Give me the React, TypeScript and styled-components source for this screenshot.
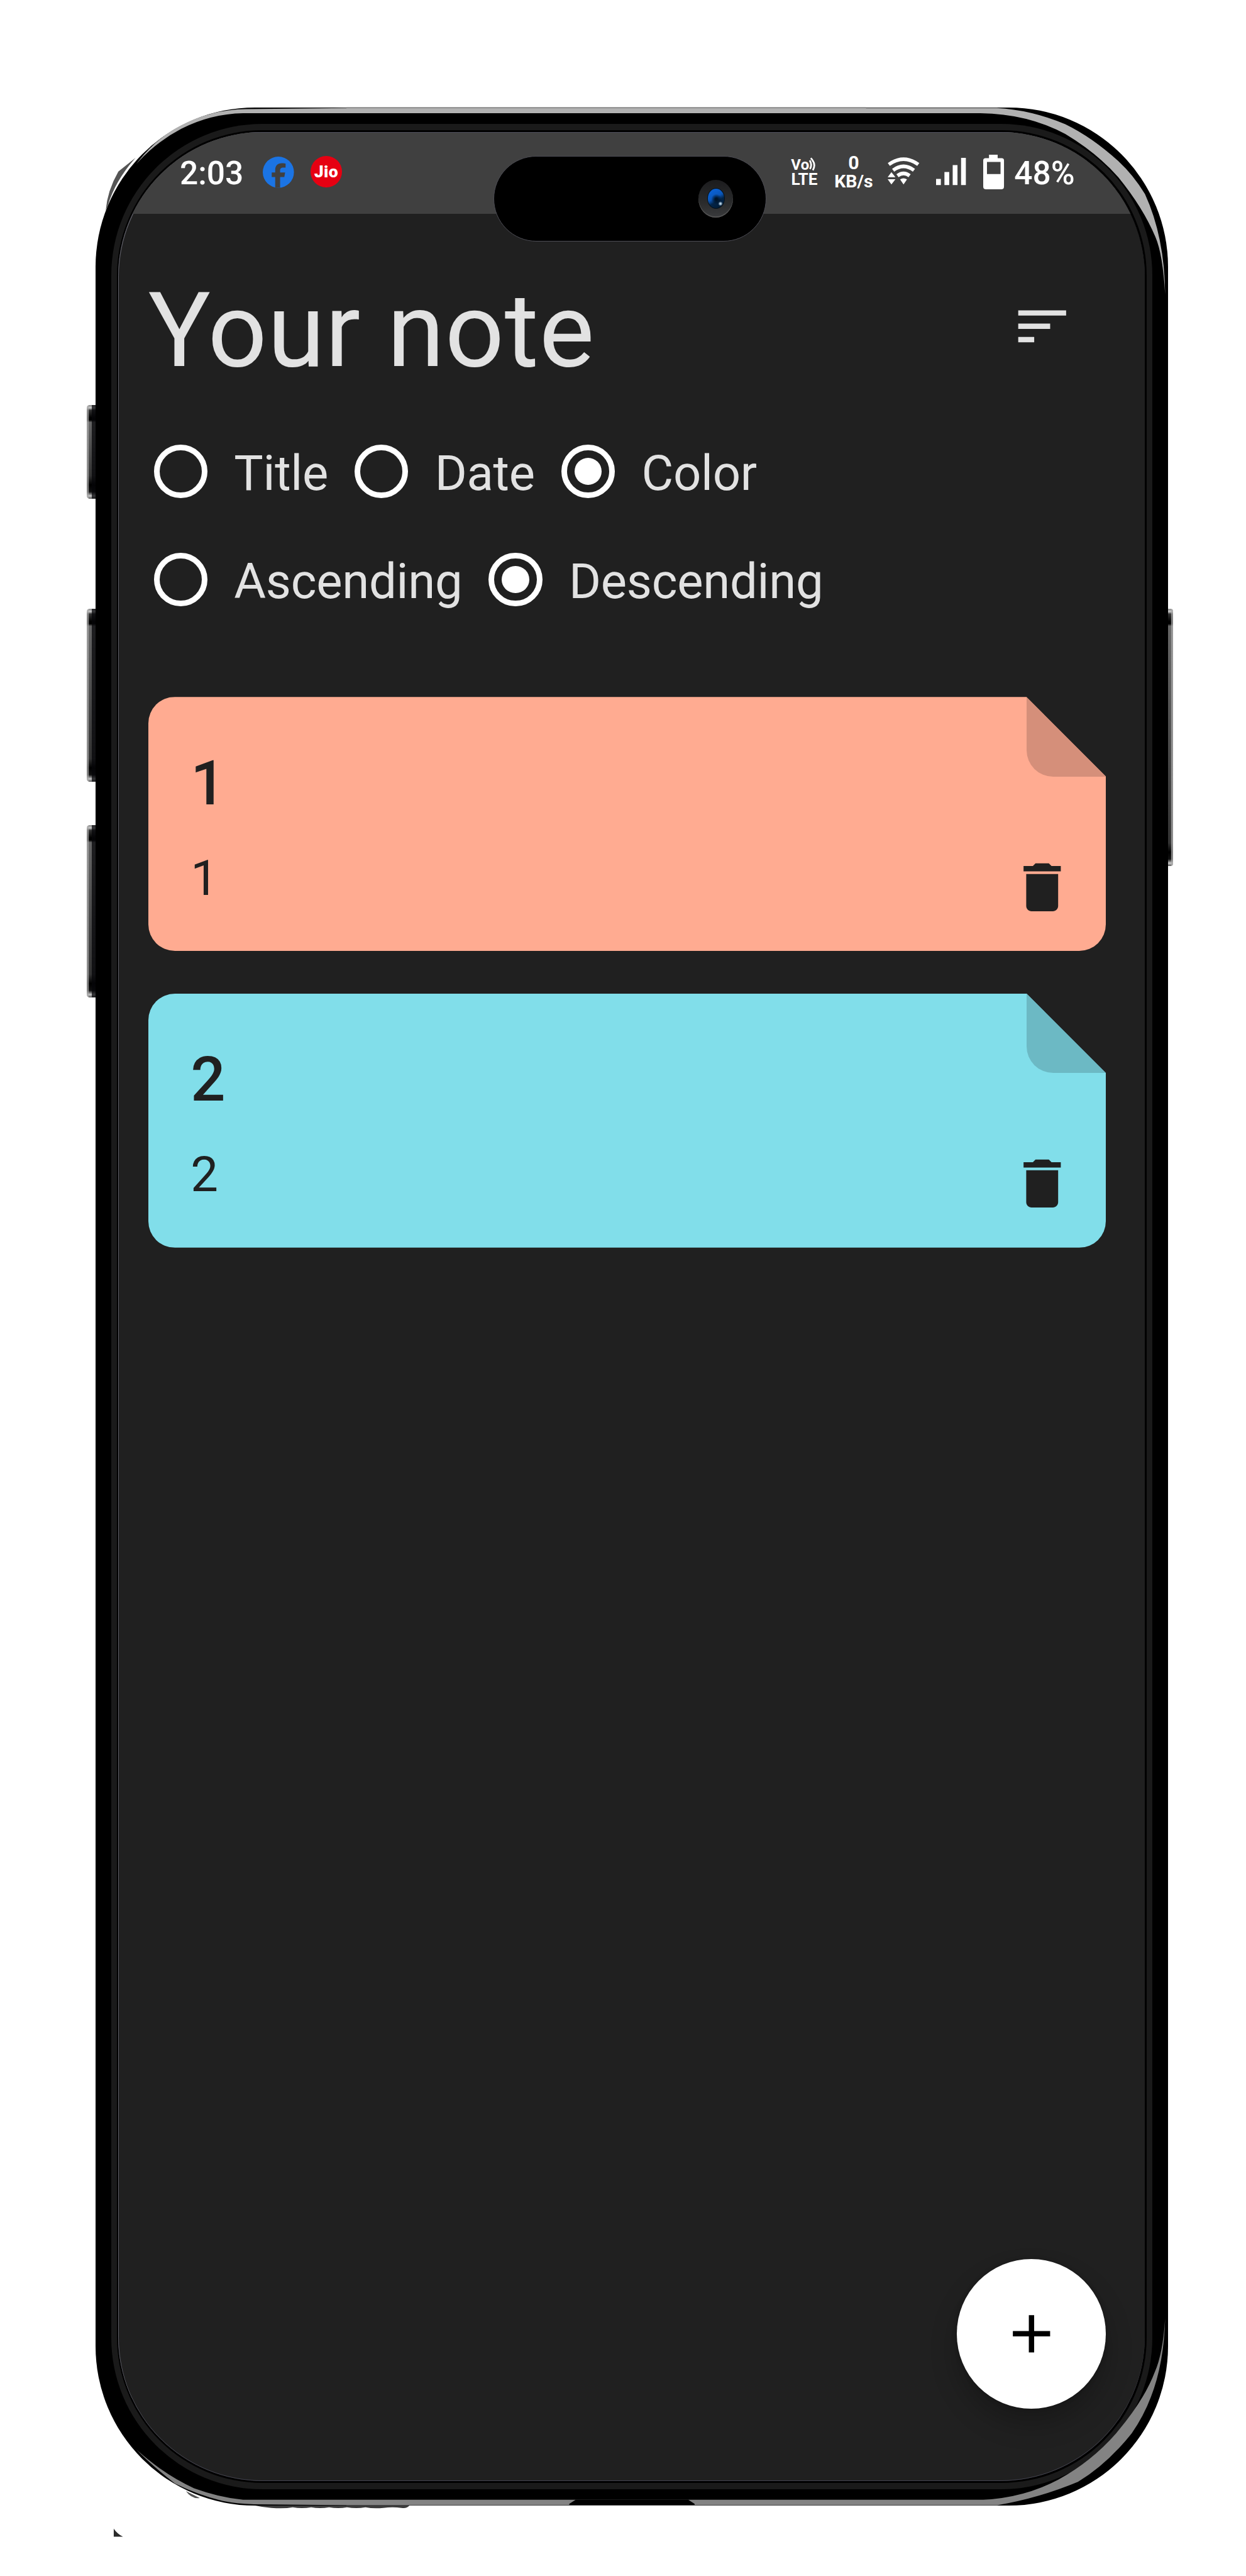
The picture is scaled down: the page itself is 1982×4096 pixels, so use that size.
import React from 'react';
import styled, { createGlobalStyle, css } from 'styled-components';

/* Design units are scaled down to the size of the page. */
const SCALE = 1982 / 2158;
const u = (n: number) => `${+(n * SCALE).toFixed(3)}px`;

const GlobalStyle = createGlobalStyle`
  * { box-sizing: border-box; }
  html, body { margin: 0; padding: 0; background: #ffffff; }
  body { font-family: Roboto, "Liberation Sans", sans-serif; }
`;

const Stage = styled.main`
  width: 1982px;
  height: 4096px;
  padding: ${u(186)} 0 0 ${u(166)};
  overflow: hidden;
  position: relative;
  background: #fff;
`;

const Phone = styled.div`
  position: relative;
  width: ${u(1857)};
  height: ${u(4152)};
  padding: ${u(29)} ${u(27)} ${u(29)} ${u(26.5)};
  background: #000;
  border-radius: ${u(276)};
`;

const Bezel = styled.div`
  height: 100%;
  padding: ${u(10.5)};
  background: #1a1a1a;
  border-radius: ${u(262)};
`;

const Gasket = styled.div`
  height: 100%;
  padding: ${u(3)} ${u(3)} ${u(3)} ${u(2)};
  background: #000;
  border-radius: ${u(252)};
`;

const Screen = styled.div`
  position: relative;
  display: flex;
  flex-direction: column;
  height: 100%;
  overflow: hidden;
  background: #202020;
  border-radius: ${u(250)};
  box-shadow: inset 1px 1px 0 #5d5d66, inset 0 -1px 0 #44444f;
`;

const SideButton = styled.span<{ $top: number; $height: number; $right?: boolean }>`
  position: absolute;
  top: ${p => u(p.$top - 186)};
  height: ${p => u(p.$height)};
  width: ${p => u(p.$right ? 9 : 16)};
  ${p => (p.$right
    ? css`left: 100%; border-radius: 0 ${u(4)} ${u(4)} 0;`
    : css`right: 100%; border-radius: ${u(5)} 0 0 ${u(5)};`)}
  background:
    linear-gradient(${p => (p.$right ? 'to left' : 'to right')}, rgba(170,170,170,.75) 0 ${u(3)}, transparent ${u(4)} ${u(9)}, rgba(5,5,8,.75) ${u(9)}),
    linear-gradient(#888 0, #c8c8c8 ${u(5)}, #333 ${u(9)}, #000 ${u(22)}, #000 ${u(26)}, #666 ${u(30)}, #333 calc(100% - ${u(40)}), #000 calc(100% - ${u(24)}), #111 calc(100% - ${u(12)}), #c8c8c8 calc(100% - ${u(5)}), #555 100%);
`;

const Overlay = styled.svg`
  position: absolute;
  left: 0;
  top: 0;
  width: 1982px;
  height: 4096px;
  pointer-events: none;
`;

const StatusBar = styled.header`
  display: flex;
  align-items: flex-start;
  justify-content: space-between;
  flex: none;
  height: ${u(142)};
  padding: ${u(37)} ${u(122)} 0 ${u(106.5)};
  background: #404040;
  box-shadow: inset 0 1px 0 #50505c;
  color: #fff;
`;

const StatusGroup = styled.div`
  display: flex;
  align-items: flex-start;
`;

const StatusText = styled.span<{ $width: number; $indent?: number }>`
  width: ${p => u(p.$width)};
  margin-top: ${u(2.5)};
  padding-left: ${p => u(p.$indent ?? 0)};
  font-size: ${u(56)};
  line-height: ${u(66)};
  font-weight: 500;
  white-space: nowrap;
`;

const Glyph = styled.svg<{ $w: number; $h: number; $ml?: number; $mt?: number }>`
  display: block;
  flex: none;
  width: ${p => u(p.$w)};
  height: ${p => u(p.$h)};
  margin: ${p => u(p.$mt ?? 0)} 0 0 ${p => u(p.$ml ?? 0)};
  overflow: visible;
`;

const JioBadge = styled.span`
  display: flex;
  align-items: center;
  justify-content: center;
  width: ${u(54)};
  height: ${u(54)};
  margin: ${u(5)} 0 0 ${u(29)};
  border-radius: 50%;
  background: #e60012;
  font-size: ${u(29)};
  font-weight: 900;
  letter-spacing: ${u(0.4)};
`;

const Stacked = styled.span<{ $ml: number; $w: number }>`
  display: flex;
  flex-direction: column;
  align-items: center;
  width: ${p => u(p.$w)};
  margin-left: ${p => u(p.$ml)};
  font-weight: 700;
  white-space: nowrap;
`;

const StackLine = styled.span<{ $size: number; $lh: number; $mt?: number }>`
  height: ${p => u(p.$lh)};
  margin-top: ${p => u(p.$mt ?? 0)};
  font-size: ${p => u(p.$size)};
  line-height: ${p => u(p.$lh)};
`;

const VoLine = styled(StackLine)`
  display: flex;
  align-items: flex-start;
  align-self: flex-start;
  letter-spacing: ${u(0.3)};
`;

const Island = styled.div`
  position: absolute;
  top: ${u(41.5)};
  left: ${u(650)};
  display: flex;
  align-items: center;
  justify-content: flex-end;
  width: ${u(472)};
  height: ${u(148)};
  padding-right: ${u(56)};
  border: 1px solid #4d4d55;
  border-radius: ${u(74)};
  background: #000;
`;

const Camera = styled.span`
  display: flex;
  align-items: center;
  justify-content: center;
  width: ${u(60)};
  height: ${u(65)};
  border-radius: 50%;
  background: linear-gradient(#1c1c1e, #2a2b2c 60%, #3a3b3d);
  box-shadow: inset 0 ${u(-2)} ${u(1)} #555;
`;

const Lens = styled.span`
  width: ${u(31)};
  height: ${u(36)};
  border: ${u(1.5)} solid #06121a;
  border-radius: 50%;
  background:
    radial-gradient(circle at 77% 77%, #b9d3e6 0 ${u(1)}, transparent ${u(4)}),
    radial-gradient(circle at 52% 54%, #001428 0 ${u(2)}, transparent ${u(9)}),
    linear-gradient(150deg, #0a5fd0 20%, #0b56b8 45%, #032448 62%, #021a30);
`;

const Content = styled.div`
  display: flex;
  flex-direction: column;
  flex: 1;
  padding: 0 ${u(66.8)} 0 ${u(51.6)};
`;

const TitleRow = styled.div`
  display: flex;
  align-items: center;
  justify-content: space-between;
  height: ${u(212)};
  margin-top: ${u(88)};
  padding-right: ${u(55.5)};
`;

const Title = styled.h1`
  margin: ${u(17)} 0 0;
  font-size: ${u(180)};
  line-height: ${u(212)};
  font-weight: 400;
  letter-spacing: ${u(0.8)};
  color: #e2e2e2;
  white-space: nowrap;
`;

const IconButton = styled.button`
  display: block;
  padding: 0;
  border: 0;
  background: none;
  line-height: 0;
`;

const RadioRow = styled.div<{ $mt: number }>`
  display: flex;
  align-items: center;
  height: ${u(93)};
  margin-top: ${p => u(p.$mt)};
  padding-left: ${u(9.8)};
`;

const RadioLabel = styled.label<{ $width?: number }>`
  display: flex;
  align-items: center;
  gap: ${u(46)};
  width: ${p => (p.$width ? u(p.$width) : 'auto')};
  font-size: ${u(84.8)};
  line-height: ${u(93)};
  letter-spacing: ${u(-0.3)};
  color: #e2e2e2;
  white-space: nowrap;
`;

const RadioText = styled.span`
  padding-top: ${u(8)};
`;

const Radio = styled.span<{ $on?: boolean }>`
  flex: none;
  display: flex;
  align-items: center;
  justify-content: center;
  width: ${u(93)};
  height: ${u(93)};
  border: ${u(9.8)} solid #fff;
  border-radius: 50%;
  &::after {
    content: '';
    width: ${u(47)};
    height: ${u(47)};
    border-radius: 50%;
    background: ${p => (p.$on ? '#fff' : 'transparent')};
  }
`;

const Notes = styled.div`
  display: flex;
  flex-direction: column;
  gap: ${u(73.4)};
  margin-top: ${u(157)};
`;

const Note = styled.article<{ $color: string }>`
  display: flex;
  justify-content: space-between;
  height: ${u(440)};
  border-radius: ${u(46)};
  background: ${p => p.$color};
  clip-path: polygon(0 0, calc(100% - ${u(138)}) 0, 100% ${u(138)}, 100% 100%, 0 100%);
  color: #202020;
`;

const NoteText = styled.div`
  padding: ${u(89)} 0 0 ${u(73.7)};
`;

const NoteTitle = styled.h2`
  margin: 0;
  font-size: ${u(106)};
  line-height: ${u(124)};
  font-weight: 500;
`;

const NoteBody = styled.p`
  margin: ${u(51)} 0 0;
  font-size: ${u(84.8)};
  line-height: ${u(100)};
`;

const NoteSide = styled.div`
  display: flex;
  flex-direction: column;
  align-items: flex-end;
  justify-content: space-between;
  padding-bottom: ${u(55.5)};
  > button { margin-right: ${u(55.5)}; }
`;

const Fold = styled.div<{ $color: string }>`
  width: ${u(138)};
  height: ${u(138)};
  border-bottom-left-radius: ${u(46)};
  background: ${p => p.$color};
`;

const Fab = styled.button`
  display: flex;
  align-items: center;
  justify-content: center;
  width: ${u(258.6)};
  height: ${u(258.6)};
  margin: auto 0 ${u(125.7)} auto;
  padding: 0;
  border: 0;
  border-radius: 50%;
  background: #fff;
  box-shadow: 0 ${u(26)} ${u(46)} rgba(0, 0, 0, 0.24), 0 0 ${u(8)} rgba(0, 0, 0, 0.2);
`;

const SORTS = [
  { label: 'Title', width: 347.8 },
  { label: 'Date', width: 358 },
  { label: 'Color', on: true },
];
const ORDERS = [
  { label: 'Ascending', width: 580 },
  { label: 'Descending', on: true },
];
const NOTES = [
  { title: '1', body: '1', color: '#ffab91', fold: '#d58f7a' },
  { title: '2', body: '2', color: '#81deea', fold: '#6cb9c4' },
];

function Options({ items, mt }: { items: { label: string; width?: number; on?: boolean }[]; mt: number }) {
  return (
    <RadioRow $mt={mt}>
      {items.map(o => (
        <RadioLabel key={o.label} $width={o.width}>
          <Radio $on={o.on} />
          <RadioText>{o.label}</RadioText>
        </RadioLabel>
      ))}
    </RadioRow>
  );
}

function Status() {
  return (
    <StatusBar>
      <StatusGroup>
        <StatusText $width={143.5}>2:03</StatusText>
        <Glyph $w={54} $h={54} $mt={5.5} viewBox="0 0 54 54">
          <circle cx="27" cy="27" r="27" fill="#1b74e4" />
          <path d="M21.5 54V35.5H15.5V27.5H21.5V23.5C21.5 15 26 11.3 33 11.3C36 11.3 39 11.7 39.5 12V19H35.5C31.5 19 30 20.8 30 24V27.5H38.7L37.3 35.5H30V54Z" fill="#404040" />
        </Glyph>
        <JioBadge>Jio</JioBadge>
      </StatusGroup>
      <StatusGroup>
        <Stacked $ml={0} $w={46}>
          <VoLine $size={26} $lh={41}>
            Vo
            <Glyph $w={12} $h={24} $ml={0} $mt={7} viewBox="0 0 12 24">
              <path d="M1 5.5Q6 13 1.5 20.5M3 1.5Q13 12 6.5 22.5" fill="none" stroke="#fff" strokeWidth="3" />
            </Glyph>
          </VoLine>
          <StackLine $size={28.5} $lh={20} $mt={-6}>LTE</StackLine>
        </Stacked>
        <Stacked $ml={27.5} $w={70}>
          <StackLine $size={33} $lh={33}>0</StackLine>
          <StackLine $size={31} $lh={32}>KB/s</StackLine>
        </Stacked>
        <Glyph $w={55} $h={47} $ml={23.5} $mt={7} viewBox="0 0 55 47">
          <g fill="none" stroke="#fff" strokeWidth="6.2">
            <path d="M2 12.5Q27.5 -5.5 53 12.5" />
            <path d="M9.5 22.5Q27.5 9 45.5 22.5" />
            <path d="M17 32Q27.5 24 38 32" />
          </g>
          <path d="M21.5 38.5Q27.5 34.5 33.5 38.5L27.5 47Z" fill="#fff" />
          <path d="M6.5 26L13.5 34.5H0ZM0 38H13.5L6.5 47Z" fill="#fff" />
        </Glyph>
        <Glyph $w={52} $h={47} $ml={29} $mt={7.5} viewBox="0 0 52 47">
          <path d="M0 36.5h8.3V47H0ZM14.5 24.5h8.3V47h-8.3ZM28.8 12.5h8.3V47h-8.3ZM43.3 0h8.3V47h-8.3Z" fill="#fff" />
        </Glyph>
        <Glyph $w={36} $h={60} $ml={29.5} $mt={2} viewBox="0 0 36 60">
          <path fillRule="evenodd" d="M10 0H25V6H32Q36 6 36 10V55Q36 60 31 60H5Q0 60 0 55V10Q0 6 4 6H10ZM6.5 12.5V33.5H30V12.5Z" fill="#fff" />
        </Glyph>
        <StatusText $width={122} $indent={18}>48%</StatusText>
      </StatusGroup>
    </StatusBar>
  );
}

export default function App() {
  return (
    <Stage>
      <GlobalStyle />
      <Phone>
        <SideButton $top={701} $height={162} />
        <SideButton $top={1054} $height={299} />
        <SideButton $top={1428} $height={299} />
        <SideButton $top={1054} $height={445} $right />
        <Bezel>
          <Gasket>
            <Screen>
              <Status />
              <Island>
                <Camera><Lens /></Camera>
              </Island>
              <Content>
                <TitleRow>
                  <Title>Your note</Title>
                  <IconButton aria-label="Sort">
                    <Glyph $w={110.6} $h={110.6} viewBox="0 0 24 24">
                      <path d="M3 18h6v-2H3v2zM3 6v2h18V6H3zm0 7h12v-2H3v2z" fill="#e2e2e2" />
                    </Glyph>
                  </IconButton>
                </TitleRow>
                <Options items={SORTS} mt={99} />
                <Options items={ORDERS} mt={94.2} />
                <Notes>
                  {NOTES.map(n => (
                    <Note key={n.title} $color={n.color}>
                      <NoteText>
                        <NoteTitle>{n.title}</NoteTitle>
                        <NoteBody>{n.body}</NoteBody>
                      </NoteText>
                      <NoteSide>
                        <Fold $color={n.fold} />
                        <IconButton aria-label="Delete note">
                          <Glyph $w={110.6} $h={110.6} viewBox="0 0 24 24">
                            <path d="M6 19c0 1.1.9 2 2 2h8c1.1 0 2-.9 2-2V7H6v12zM19 4h-3.5l-1-1h-5l-1 1H5v2h14V4z" fill="#202020" />
                          </Glyph>
                        </IconButton>
                      </NoteSide>
                    </Note>
                  ))}
                </Notes>
                <Fab aria-label="Add note">
                  <Glyph $w={110.6} $h={110.6} viewBox="0 0 24 24">
                    <path d="M19 13h-6v6h-2v-6H5v-2h6V5h2v6h6v2z" fill="#000" />
                  </Glyph>
                </Fab>
              </Content>
            </Screen>
          </Gasket>
        </Bezel>
      </Phone>
      {/* Metallic reflections on the frame and the marks around it */}
      <Overlay viewBox="0 0 2158 4460" preserveAspectRatio="none">
        <path
          d="M236 284Q270 239 314 217Q365 190 426 189L600 187H1726Q1785 190 1845 215Q1892 238 1937 279Q1963 303 1983 336Q2017 410 2018 510Q2014 440 2001 410Q1980 360 1937 307Q1900 265 1845 232Q1780 197 1698 196H421Q365 197 314 223Q270 246 236 284Z"
          fill="#b1b1b1"
        />
        <path d="M600 186.5H1500" stroke="#777" strokeWidth="1.5" />
        <path
          d="M236 4241Q262 4268 303 4300Q344 4320 385 4330Q410 4335 440 4336L635 4337.5H1727Q1800 4325 1867 4297Q1917 4267 1960 4213Q2015 4135 2018 4014Q2014 4075 2000 4107Q1982 4155 1933 4213Q1890 4262 1833 4293Q1775 4324 1703 4328H421Q380 4324 336 4308Q285 4285 236 4241Z"
          fill="#838383"
        />
        <path d="M997 4328H1192L1203 4335V4338H986V4335Z" fill="#000" />
        <path d="M600 4337.5H1700" stroke="#444" strokeWidth="1.2" />
        <path d="M442 4338H709Q704 4344 695 4342Q680 4340 664 4342Q648 4344 633 4341Q617 4344 601 4341Q586 4344 570 4341Q554 4344 539 4341Q523 4344 507 4341Q492 4344 470 4342Q455 4341 442 4338Z" fill="#3a3a3a" />
        <path d="M322 4313L346 4325Q332 4327 322 4313Z" fill="#555" />
        <path d="M197 4378Q203 4387 213 4392H197Z" fill="#2a2a2a" />
        <path d="M183 365Q186 330 205 297L235 273Q200 312 187 355Z" fill="#555" />
      </Overlay>
    </Stage>
  );
}
